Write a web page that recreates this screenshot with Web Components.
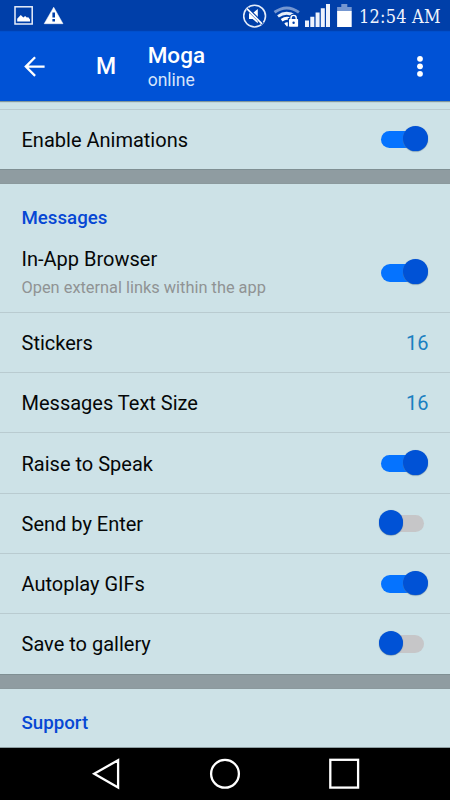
<!DOCTYPE html>
<html lang="en">
<head>
<meta charset="utf-8">
<title>Settings</title>
<style>
html,body{margin:0;height:100%;overflow:hidden;background:#cde2e7}
body{font-family:Roboto,sans-serif;color:#050707}
</style>
</head>
<body>
<settings-screen></settings-screen>
<script>
function define(name, html) {
  const template = document.createElement('template');
  template.innerHTML = html;
  customElements.define(name, class extends HTMLElement {
    constructor() {
      super();
      this.attachShadow({ mode: 'open' }).append(template.content.cloneNode(true));
    }
  });
}

define('status-bar', `
<style>
:host{display:flex;height:31px;background:#003fa9;color:#fff;justify-content:space-between;box-sizing:border-box;box-shadow:inset 0 -1px #0040b0}
svg{display:block}
time{font:18px/31px "DejaVu Serif Condensed","DejaVu Serif",serif;font-stretch:condensed;letter-spacing:.22px;white-space:nowrap;width:91px;padding-top:1px;box-sizing:border-box;color:#f0f4fc}
.right{display:flex}
</style>
<svg width="70" height="31" viewBox="0 0 70 31">
  <rect x="15" y="6.8" width="17.2" height="17.2" fill="none" stroke="#e9effa" stroke-width="1.5"/>
  <path d="M17.2 21.6V18.8L20.8 15l2.6 2.5 1.7-1.4 1.7 1.4 1.5-.3 1.7 2.3v2.1z" fill="#fff"/>
  <path d="M53.7 7.2L63 23.7H44.2z" fill="#fff" stroke="#fff" stroke-width=".5" stroke-linejoin="round"/>
  <path d="M52.4 12.5h2.6v5h-2.6zM52.4 19h2.6v2.4h-2.6z" fill="#003fa9"/>
</svg>
<div class="right">
<svg width="116" height="31" viewBox="243 0 116 31">
  <circle cx="254.6" cy="16.1" r="10.9" fill="none" stroke="#e4ecf9" stroke-width="1.6"/>
  <path d="M249 13.2h3.6l5.2-4.2v14.3l-5.2-4.2H249z" fill="#fff"/>
  <path d="M247.2 8.3l15.4 15.6" stroke="#003fa9" stroke-width="3.2"/>
  <path d="M246.9 8.6l15.1 15.2" stroke="#fff" stroke-width="1.7"/>
  <g fill="none" stroke-width="2.9">
    <path d="M274.5 12.3q12.3-8.8 24.4 0" stroke="#7597d1"/>
    <path d="M278 16.4q8.7-6.2 17.3 0" stroke="#e8effa"/>
    <path d="M281.6 20.3q5-3.5 9.2-.8" stroke="#fff"/>
  </g>
  <path d="M284.3 23.5l2.8 3.3 1.8-2.1v-2.2q-2.8-.8-4.6 1z" fill="#fff"/>
  <rect x="287.8" y="18.1" width="11.4" height="9" fill="#003fa9"/>
  <path d="M291 19.7v-1.6a2.6 2.6 0 0 1 5.2 0v1.6" fill="none" stroke="#003fa9" stroke-width="3.5"/>
  <rect x="289" y="19.1" width="9.1" height="7.6" rx=".7" fill="#fff"/>
  <path d="M291 19.6V18a2.6 2.6 0 0 1 5.2 0v1.6" fill="none" stroke="#fff" stroke-width="1.4"/>
  <circle cx="293.6" cy="22.8" r="1.2" fill="#003fa9"/>
  <path d="M305 20.6h4V27h-4zM310.3 16.8h4V27h-4zM315.6 12.4h4V27h-4zM320.8 8.3h4V27h-4zM326 4h4v23h-4z" fill="#eef3fc"/>
  <path d="M341.3 4h6v3h4.4v4.2h-14.6V7h4.2z" fill="#7597d1"/>
  <path d="M337.1 11h14.6v16h-14.6z" fill="#fff"/>
</svg>
<time>12:54 AM</time>
</div>`);

define('app-header', `
<style>
:host{display:flex;height:70px;background:#0052d6;color:#fff;align-items:center;position:relative;z-index:1;box-shadow:0 1px 1px #81979c,inset 0 1px #004fcc}
.back{margin-left:20px;width:30px}
.avatar{width:52px;margin-left:30px;font-size:23px;font-weight:500;text-align:center;padding-top:1px}
.title{margin-left:15.7px;flex:1;padding-top:2px}
.name{font-size:22.5px;font-weight:500;line-height:25px}
.state{font-size:17.5px;line-height:24px;color:#d6e4fb}
.more{margin-right:20px}
svg{display:block}
</style>
<svg class="back" width="30" height="30" viewBox="0 0 30 30"><path d="M24.6 15.6H6.4M15.1 6.3L5.8 15.6l9.3 9.3" fill="none" stroke="#fff" stroke-width="2.3"/></svg>
<div class="avatar"><slot name="avatar"></slot></div>
<div class="title"><div class="name"><slot name="name"></slot></div><div class="state"><slot name="state"></slot></div></div>
<svg class="more" width="20" height="30" viewBox="0 0 20 30" fill="#fff"><circle cx="10" cy="7.8" r="2.9"/><circle cx="10" cy="15.3" r="2.9"/><circle cx="10" cy="22.8" r="2.9"/></svg>`);

define('toggle-switch', `
<style>
:host{display:block;position:relative;width:50px;height:26px}
.track{width:43px;height:17.5px;margin:4.2px 0 0 4px;border-radius:9px;background:#c6c6c8}
.thumb{position:absolute;left:1.6px;top:.6px;width:24.6px;height:24.6px;border-radius:50%;background:#0052d6;box-shadow:0 .5px 1px #587b9c}
:host([on]) .track{margin-left:4.2px;background:#0573ff}
:host([on]) .thumb{left:26.2px}
</style><div class="track"></div><div class="thumb"></div>`);

define('setting-row', `
<style>
:host{display:flex;box-sizing:border-box;height:60.25px;padding:0 21.5px;align-items:center;border-bottom:1px solid #b9cbd0;font-size:20px}
:host([last]){border-bottom-color:#cde2e7}
:host([tall]){height:77px;padding-bottom:3px}
.copy{flex:1;line-height:26px;white-space:nowrap;padding-top:1px}
::slotted([slot=detail]){display:block;font-size:16.37px;line-height:24px;color:#909394;margin-top:4px}
::slotted([slot=value]){color:#1a80c1;font-size:20px;padding-top:1px}
::slotted(toggle-switch){margin-right:1.5px;padding-top:0}
</style><div class="copy"><slot></slot><slot name="detail"></slot></div><slot name="value"></slot>`);

define('section-title', `
<style>
:host{display:block;box-sizing:border-box;padding:22px 21.5px 0;height:51.5px;font-size:18.7px;line-height:25px;font-weight:500;color:#0647d4}
</style><slot></slot>`);

define('section-gap', `
<style>
:host{display:block;box-sizing:border-box;height:15px;background:#8f9ca1;border-top:1px solid #7f8f93;border-bottom:1px solid #8b999d}
</style>`);

define('nav-bar', `
<style>
:host{display:block;height:52px;background:#000;position:relative;box-shadow:0 -1px #8d9ea2}
svg{display:block}
</style>
<svg width="450" height="52" viewBox="0 748 450 52" fill="none" stroke="#fff" stroke-width="2.3">
<path d="M118.1 760.2v27.2L94.2 773.7z"/><circle cx="225" cy="773.8" r="13.9"/><rect x="330.3" y="759.8" width="27.8" height="27.8"/>
</svg>`);

define('settings-screen', `
<style>
:host{display:grid;width:450px;height:800px;grid-template-rows:31px 70px 1fr 52px;background:#cde2e7}
main{min-height:0;overflow:hidden;padding-top:8px}
.first{height:60.4px;border-top:1px solid #b9cbd0}
</style>
<status-bar></status-bar>
<app-header><span slot="avatar">M</span><span slot="name">Moga</span><span slot="state">online</span></app-header>
<main>
<setting-row class="first" last>Enable Animations<toggle-switch slot="value" on></toggle-switch></setting-row>
<section-gap></section-gap>
<section-title>Messages</section-title>
<setting-row tall>In-App Browser<span slot="detail">Open external links within the app</span><toggle-switch slot="value" on></toggle-switch></setting-row>
<setting-row>Stickers<span slot="value">16</span></setting-row>
<setting-row>Messages Text Size<span slot="value">16</span></setting-row>
<setting-row>Raise to Speak<toggle-switch slot="value" on></toggle-switch></setting-row>
<setting-row>Send by Enter<toggle-switch slot="value"></toggle-switch></setting-row>
<setting-row>Autoplay GIFs<toggle-switch slot="value" on></toggle-switch></setting-row>
<setting-row last>Save to gallery<toggle-switch slot="value"></toggle-switch></setting-row>
<section-gap></section-gap>
<section-title>Support</section-title>
</main>
<nav-bar></nav-bar>`);
</script>
</body>
</html>
